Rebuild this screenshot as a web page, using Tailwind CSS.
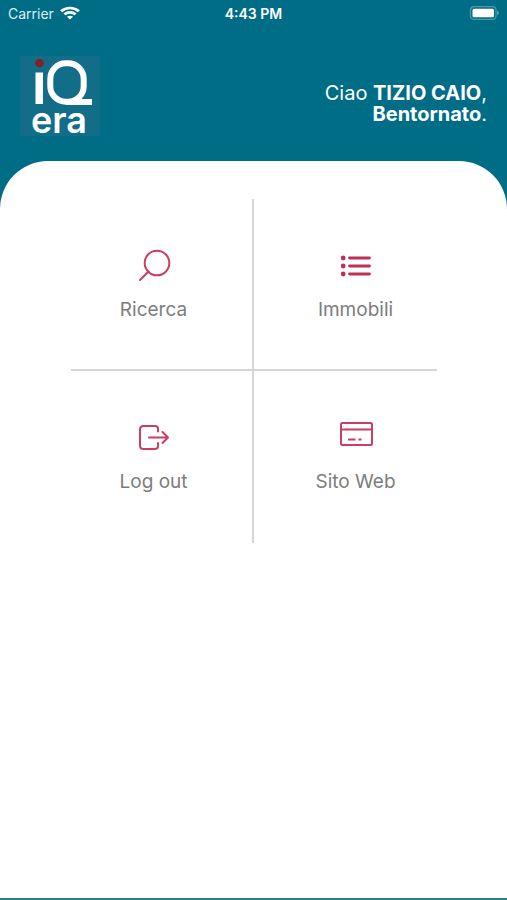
<!DOCTYPE html>
<html lang="it">
<head>
<meta charset="utf-8">
<meta name="viewport" content="width=device-width, initial-scale=1">
<title>iQera</title>
<script src="https://cdn.jsdelivr.net/npm/@tailwindcss/browser@4"></script>
</head>
<body class="flex min-h-screen flex-col bg-[#006d87] font-['Inter','Liberation_Sans',sans-serif]">
  <div class="grid h-7 grid-cols-3 items-center px-2 text-sm text-[#d9eef2]">
    <div class="flex items-center gap-1.5">
      <span>Carrier</span>
      <svg class="mb-0.5 h-3.5 w-5" viewBox="0 0 18 14" preserveAspectRatio="none" fill="none" stroke="#fff" stroke-width="2.600" aria-label="Wi-Fi">
        <path d="M1 5.300C5.500 .9 12.500 .9 17 5.300M4 8.400C6.800 5.700 11.200 5.700 14 8.400"/>
        <path d="M9 13.500L6.200 10.800C7.800 9.400 10.200 9.400 11.800 10.800Z" fill="#fff" stroke="none"/>
      </svg>
    </div>
    <span class="text-center font-semibold text-white">4:43 PM</span>
    <svg class="mb-0.5 h-3.5 w-[30px] justify-self-end" viewBox="0 0 30 14" aria-label="Batteria">
      <rect x="1.500" y=".7" width="25.500" height="12.600" rx="3.500" fill="none" stroke="#4d98ab" stroke-width="1.200"/>
      <rect x="3.500" y="2.700" width="21.500" height="8.600" rx="1.500" fill="#fff"/>
      <path d="M28.200 4.800C30.300 5.600 30.300 8.400 28.200 9.200Z" fill="#69a9b9"/>
    </svg>
  </div>

  <header class="flex items-center justify-between px-5 pt-7 pb-[25px] text-white">
    <svg class="size-20 overflow-visible" viewBox="0 0 80 80" role="img" aria-label="iQera">
      <rect width="80" height="80" fill="#126d88"/>
      <circle cx="19.500" cy="7" r="4.300" fill="#861f26"/>
      <rect x="15.500" y="16.500" width="7.500" height="31.500" fill="#fff"/>
      <rect x="30.300" y="7.300" width="33.400" height="38.400" rx="15.500" fill="none" stroke="#fff" stroke-width="6"/>
      <rect x="46" y="43" width="26" height="6" fill="#fff"/>
      <text x="11" y="77" fill="#fff" font-family="Inter, sans-serif" font-size="36" font-weight="600">era</text>
    </svg>
    <p class="pt-4 text-right text-xl leading-[21px]">Ciao <strong class="font-bold">TIZIO CAIO</strong>,<br><strong class="font-bold">Bentornato</strong>.</p>
  </header>

  <main class="flex-1 rounded-t-[48px] border-b-2 border-[#2c8195] bg-white pr-[70px] pl-[71px] pt-[38px]">
    <nav class="grid grid-cols-2 text-[19px] leading-7 text-[#7d7d7d]">
      <a href="#ricerca" class="flex h-[172px] flex-col items-center gap-[13px] border-r-2 border-b-2 border-[#d6d6d6] pt-12 pr-4">
        <svg class="size-9" viewBox="0 0 36 36" fill="none" stroke="#c93e62" stroke-width="2" stroke-linecap="round" aria-hidden="true">
          <circle cx="21" cy="16" r="12.300"/><path d="M12.500 24.500L4 33"/>
        </svg>
        <span>Ricerca</span>
      </a>
      <a href="#immobili" class="flex h-[172px] flex-col items-center gap-[13px] border-b-2 border-[#d6d6d6] pt-12 pl-5">
        <svg class="size-9" viewBox="0 0 36 36" stroke="#bd3156" stroke-width="2.800" stroke-linecap="round" fill="#bd3156" aria-hidden="true">
          <path d="M11.500 11H31.500M11.500 19H31.500M11.500 27H31.500"/>
          <g stroke="none"><circle cx="5.200" cy="11" r="2.400"/><circle cx="5.200" cy="19" r="2.400"/><circle cx="5.200" cy="27" r="2.400"/></g>
        </svg>
        <span>Immobili</span>
      </a>
      <button type="button" class="flex h-[172px] cursor-pointer flex-col items-center gap-[13px] border-r-2 border-[#d6d6d6] pt-12 pr-4">
        <svg class="size-9" viewBox="0 0 36 36" fill="none" stroke="#c93e62" stroke-width="2" stroke-linecap="round" stroke-linejoin="round" aria-hidden="true">
          <path d="M22 12.500V10C22 8 21 7 19 7H7.500C5.200 7 4 8.200 4 10.500V26.500C4 28.800 5.200 30 7.500 30H19C21 30 22 29 22 27V24M13 18.500H32M26.500 13L32 18.500L26.500 24"/>
        </svg>
        <span>Log out</span>
      </button>
      <a href="#sito-web" class="flex h-[172px] flex-col items-center gap-[13px] pt-12 pl-5">
        <svg class="size-9" viewBox="0 0 36 36" fill="none" stroke="#c93e62" stroke-width="2" aria-hidden="true">
          <rect x="3" y="4" width="31" height="22" rx="1.500"/><path d="M3 10.500H34M10 20.500H17.500M20.500 20.500H23.500"/>
        </svg>
        <span>Sito Web</span>
      </a>
    </nav>
  </main>
</body>
</html>
